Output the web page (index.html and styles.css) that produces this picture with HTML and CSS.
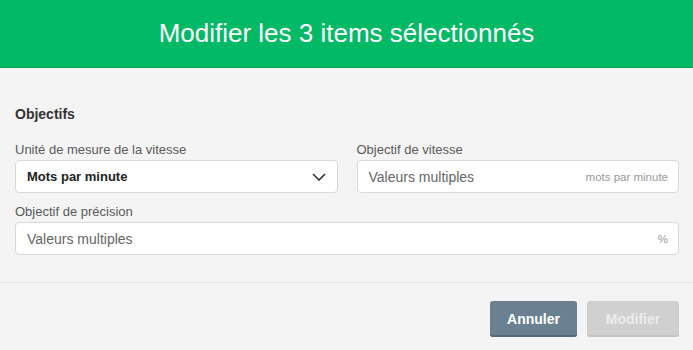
FILE: index.html
```html
<!DOCTYPE html>
<html>
<head>
  <title>Modifier les items</title>
  <link rel="stylesheet" href="styles.css">
</head>
<body>
  <header class="modal-header">
    <h1>Modifier les 3 items sélectionnés</h1>
  </header>

  <div class="modal-body">
    <h3>Objectifs</h3>
    <div class="row">
      <div class="field">
        <label>Unité de mesure de la vitesse</label>
        <div class="box select">
          <span class="value">Mots par minute</span>
          <svg width="14" height="8" viewBox="0 0 14 8"><path d="M1 1l6 6 6-6" fill="none" stroke="#333" stroke-width="1.6"/></svg>
        </div>
      </div>
      <div class="field">
        <label>Objectif de vitesse</label>
        <div class="box">
          <span class="placeholder">Valeurs multiples</span>
          <span class="unit">mots par minute</span>
        </div>
      </div>
    </div>
    <div class="field">
      <label>Objectif de précision</label>
      <div class="box">
        <span class="placeholder">Valeurs multiples</span>
        <span class="unit">%</span>
      </div>
    </div>
  </div>

  <footer class="modal-footer">
    <button class="btn cancel">Annuler</button>
    <button class="btn submit" disabled>Modifier</button>
  </footer>
</body>
</html>
```

FILE: styles.css
```css
body {
  font-family: "Liberation Sans", Arial, sans-serif;
  margin: 0;
  padding: 0;
  background-color: #f4f4f4;
  color: #333;
}

.modal-header {
  background-color: #02b966;
  border-bottom: 1px solid #0a9f55;
  height: 67px;
  display: flex;
  align-items: center;
  justify-content: center;
}
.modal-header h1 {
  margin: 0;
  color: white;
  font-size: 26px;
  font-weight: normal;
}

.modal-body {
  padding: 38px 14px 27px 15px;
  border-bottom: 1px solid #e4e4e4;
}
.modal-body h3 {
  margin: 0 0 20px;
  font-size: 14px;
  line-height: 16px;
  font-weight: bold;
  color: #333;
}

.row {
  display: grid;
  grid-template-columns: 1fr 1fr;
  gap: 19px;
  margin-bottom: 11px;
}

.field label {
  display: block;
  font-size: 13px;
  line-height: 16px;
  color: #5a5a5a;
  margin-bottom: 2px;
}

.box {
  height: 31px;
  background-color: white;
  border: 1px solid #d9d9d9;
  border-radius: 4px;
  display: flex;
  align-items: center;
  justify-content: space-between;
  padding: 0 10px 0 11px;
}
.box .value {
  font-size: 13px;
  font-weight: bold;
  color: #222;
}
.box .placeholder {
  font-size: 14px;
  color: #666;
}
.box .unit {
  font-size: 11.5px;
  color: #999;
}
.select svg {
  margin-right: 1px;
}

.modal-footer {
  display: flex;
  justify-content: flex-end;
  gap: 10px;
  padding: 18px 14px 0 0;
}

.btn {
  height: 36px;
  padding: 0 17px;
  border: none;
  border-radius: 3px;
  font-family: "Liberation Sans", Arial, sans-serif;
  font-size: 14px;
  font-weight: bold;
  color: white;
}
.btn.cancel {
  background-color: #6b8191;
  box-shadow: inset 0 -2px 0 #55697a;
  width: 87px;
}
.btn.submit {
  background-color: #d0d0d0;
  color: #ececec;
  box-shadow: inset 0 -2px 0 #c4c4c4;
  width: 92px;
}
```
